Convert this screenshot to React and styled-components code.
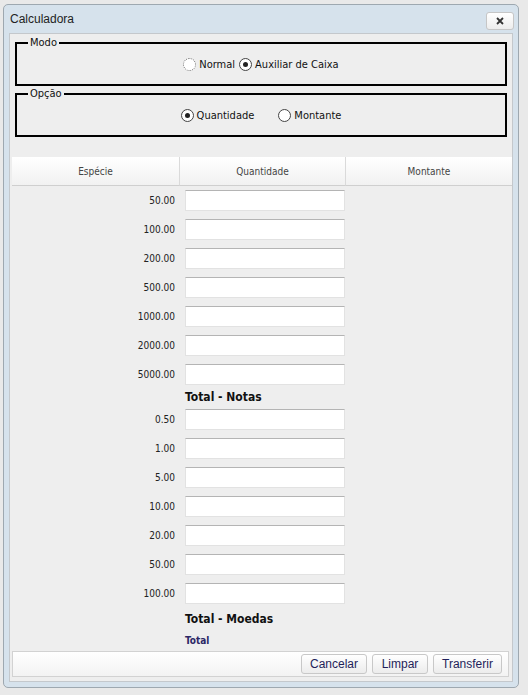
import React, { useState } from "react";
import styled, { createGlobalStyle } from "styled-components";

const GlobalStyle = createGlobalStyle`
  html, body {
    margin: 0;
    padding: 0;
    background: #e9e9e9;
  }
  body {
    font-family: "DejaVu Sans Condensed", "DejaVu Sans", Tahoma, sans-serif;
    font-size: 11px;
    color: #222;
  }
`;

const Page = styled.div`
  padding: 4px 9px 7px 3px;
`;

const Dialog = styled.div`
  width: 516px;
  height: 684px;
  box-sizing: border-box;
  background: #d6e2ec;
  border: 1px solid #9ea8b0;
  border-radius: 5px;
  padding: 0 5px 5px 5px;
  display: flex;
  flex-direction: column;
`;

const TitleBar = styled.div`
  height: 28px;
  display: flex;
  align-items: center;
  justify-content: space-between;
  padding: 0 1px 0 1px;
`;

const Title = styled.span`
  font-family: "Liberation Sans", Arial, sans-serif;
  font-size: 12px;
  color: #222;
  margin-top: -1px;
`;

const CloseButton = styled.button`
  width: 28px;
  height: 18px;
  margin: 3px -2px 0 0;
  border: 1px solid #c6c6c6;
  border-radius: 3px;
  background: linear-gradient(#ffffff, #ededed);
  display: flex;
  align-items: center;
  justify-content: center;
  padding: 0;
  color: #333;
`;

const Content = styled.div`
  flex: 1;
  background: #eeeeee;
  border: 1px solid #c4c8cc;
  display: flex;
  flex-direction: column;
  padding: 3px 2px 4px 2px;
`;

const Group = styled.fieldset`
  margin: 0 3px ${({ gap }) => gap || 0}px 3px;
  padding: 9px 12px 13px 12px;
  border: 2px solid #000;
  display: flex;
  align-items: center;
  justify-content: center;
  gap: ${({ spacing }) => spacing}px;
`;

const Legend = styled.legend`
  padding: 0 2px;
  margin-left: -1px;
  font-size: 11px;
  line-height: 12px;
  color: #111;
`;

const RadioLabel = styled.label`
  display: flex;
  align-items: center;
  gap: 3px;
  font-size: 11px;
  line-height: 13px;
  color: #111;
  cursor: pointer;
`;

const RadioCircle = styled.span`
  width: 11px;
  height: 11px;
  border-radius: 50%;
  border: 1px ${({ focused }) => (focused ? "dotted #666" : "solid #444")};
  background: #fff;
  display: flex;
  align-items: center;
  justify-content: center;
  &::after {
    content: "";
    width: 5px;
    height: 5px;
    border-radius: 50%;
    background: #222;
    display: ${({ checked }) => (checked ? "block" : "none")};
  }
`;

const Grid = styled.div`
  display: grid;
  grid-template-columns: 167px 166px 167px;
  margin: 20px 0 0 0;
`;

const HeaderCell = styled.div`
  height: 28px;
  display: flex;
  align-items: center;
  justify-content: center;
  background: linear-gradient(#ffffff, #f1f1f1);
  border-bottom: 1px solid #cfcfcf;
  border-left: ${({ first }) => (first ? "none" : "1px solid #dadada")};
  font-size: 10px;
  color: #444;
`;

const Label = styled.div`
  height: 29px;
  display: flex;
  align-items: center;
  justify-content: flex-end;
  padding-right: 4px;
  font-size: 10px;
  color: #222;
`;

const InputCell = styled.div`
  height: 29px;
  display: flex;
  align-items: center;
  padding-left: 6px;
`;

const Field = styled.input`
  width: 160px;
  height: 21px;
  box-sizing: border-box;
  border: 1px solid #e2e2e2;
  border-top-color: #b4b4b4;
  background: #fff;
  outline: none;
  padding: 0 4px;
  font-family: inherit;
  font-size: 11px;
`;

const Empty = styled.div``;

const TotalText = styled.div`
  grid-column: 2 / 4;
  height: ${({ h }) => h}px;
  box-sizing: border-box;
  padding: ${({ top }) => top || 0}px 0 0 6px;
  display: flex;
  align-items: center;
  font-weight: bold;
  font-size: ${({ size }) => size}px;
  color: ${({ color }) => color};
`;

const ButtonBar = styled.div`
  margin: auto 1px 0 0;
  height: 26px;
  box-sizing: border-box;
  border: 1px solid #d2d2d2;
  background: linear-gradient(#ffffff, #f3f3f3);
  display: flex;
  align-items: center;
  justify-content: flex-end;
  gap: 5px;
  padding-right: 6px;
`;

const Button = styled.button`
  height: 20px;
  width: ${({ w }) => w}px;
  padding: 0;
  border: 1px solid #c8c8c8;
  border-radius: 3px;
  background: linear-gradient(#ffffff, #ececec);
  font-family: "Liberation Sans", Arial, sans-serif;
  font-size: 12px;
  color: #1f1f5a;
  cursor: pointer;
`;

const notas = ["50.00", "100.00", "200.00", "500.00", "1000.00", "2000.00", "5000.00"];
const moedas = ["0.50", "1.00", "5.00", "10.00", "20.00", "50.00", "100.00"];

const Radio = ({ checked, focused, children, onClick }) => (
  <RadioLabel onClick={onClick}>
    <RadioCircle checked={checked} focused={focused} />
    {children}
  </RadioLabel>
);

const Rows = ({ items }) =>
  items.map((v) => (
    <React.Fragment key={v}>
      <Label>{v}</Label>
      <InputCell>
        <Field />
      </InputCell>
      <Empty />
    </React.Fragment>
  ));

export default function App() {
  const [modo, setModo] = useState("aux");
  const [opcao, setOpcao] = useState("qtd");

  return (
    <Page>
      <GlobalStyle />
      <Dialog>
        <TitleBar>
          <Title>Calculadora</Title>
          <CloseButton>
            <svg width="8" height="8" viewBox="0 0 8 8">
              <path d="M1 1L7 7M7 1L1 7" stroke="#333" strokeWidth="1.8" />
            </svg>
          </CloseButton>
        </TitleBar>
        <Content>
          <Group spacing={4} gap={2}>
            <Legend>Modo</Legend>
            <Radio focused checked={modo === "normal"} onClick={() => setModo("normal")}>
              Normal
            </Radio>
            <Radio checked={modo === "aux"} onClick={() => setModo("aux")}>
              Auxiliar de Caixa
            </Radio>
          </Group>
          <Group spacing={24}>
            <Legend>Opção</Legend>
            <Radio checked={opcao === "qtd"} onClick={() => setOpcao("qtd")}>
              Quantidade
            </Radio>
            <Radio checked={opcao === "mont"} onClick={() => setOpcao("mont")}>
              Montante
            </Radio>
          </Group>
          <Grid>
            <HeaderCell first>Espécie</HeaderCell>
            <HeaderCell>Quantidade</HeaderCell>
            <HeaderCell>Montante</HeaderCell>
            <Rows items={notas} />
            <Empty />
            <TotalText h={16} size={12} color="#111">Total - Notas</TotalText>
            <Rows items={moedas} />
            <Empty />
            <TotalText h={22} size={12} color="#111">Total - Moedas</TotalText>
            <Empty />
            <TotalText h={20} size={10} color="#2b2866">Total</TotalText>
          </Grid>
          <ButtonBar>
            <Button w={66}>Cancelar</Button>
            <Button w={56}>Limpar</Button>
            <Button w={69}>Transferir</Button>
          </ButtonBar>
        </Content>
      </Dialog>
    </Page>
  );
}
